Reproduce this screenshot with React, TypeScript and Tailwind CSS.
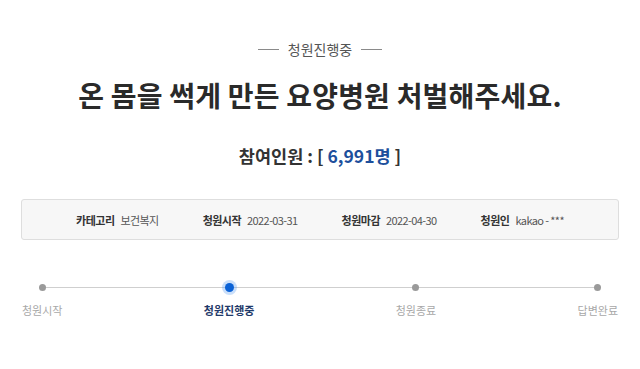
const font = { fontFamily: '"Noto Sans CJK KR", "Noto Sans", sans-serif' }

const infoItems = [
  { label: "카테고리", value: "보건복지" },
  { label: "청원시작", value: "2022-03-31" },
  { label: "청원마감", value: "2022-04-30" },
  { label: "청원인", value: "kakao - ***" },
]

const steps = [
  { name: "청원시작", active: false },
  { name: "청원진행중", active: true },
  { name: "청원종료", active: false },
  { name: "답변완료", active: false },
]

export default function App() {
  return (
    <div className="w-[640px] h-[369px] bg-white overflow-hidden" style={font}>
      <div className="flex items-center justify-center gap-[9px] pt-[38px]">
        <span className="w-[21px] h-px bg-[#8a8a8a]"></span>
        <span className="text-[14px] leading-[22px] text-[#555]">청원진행중</span>
        <span className="w-[21px] h-px bg-[#8a8a8a]"></span>
      </div>

      <h1 className="mt-[17px] text-center text-[28px] leading-[36px] font-bold text-[#2a2a2a] tracking-[0.2px]">
        온 몸을 썩게 만든 요양병원 처벌해주세요.
      </h1>

      <p className="mt-[31px] text-center text-[17.5px] leading-[24px] font-bold text-[#333]">
        참여인원 : [ <span className="text-[#1d4f9c]">6,991명</span> ]
      </p>

      <div className="mx-[21px] mt-[31px] h-[41px] rounded-[3px] border border-[#dedede] bg-[#f7f7f7] flex items-center justify-center gap-[44px]">
        {infoItems.map((item) => (
          <div key={item.label} className="flex items-center gap-[6px] text-[11px] leading-[16px]">
            <span className="font-bold text-[#333] tracking-[-0.5px]">{item.label}</span>
            <span className="text-[#555] tracking-[-0.6px]">{item.value}</span>
          </div>
        ))}
      </div>

      <div className="relative mx-[22px] mt-[42px]">
        <div className="absolute left-[19px] right-[20px] top-[5px] h-px bg-[#cfcfcf]"></div>
        <div className="relative flex justify-between">
          {steps.map((s) => (
            <div key={s.name} className="flex flex-col items-center">
              <div className="h-[11px] flex items-center justify-center">
                {s.active ? (
                  <span className="w-[9px] h-[9px] rounded-full bg-[#0b62d6] shadow-[0_0_0_3px_rgba(80,150,240,0.3)]"></span>
                ) : (
                  <span className="w-[7px] h-[7px] rounded-full bg-[#9a9a9a]"></span>
                )}
              </div>
              <span
                className={
                  s.active
                    ? "mt-[9px] text-[11px] leading-[16px] font-bold text-[#1f3a6a]"
                    : "mt-[9px] text-[11px] leading-[16px] text-[#a8a8a8]"
                }
              >
                {s.name}
              </span>
            </div>
          ))}
        </div>
      </div>
    </div>
  )
}
